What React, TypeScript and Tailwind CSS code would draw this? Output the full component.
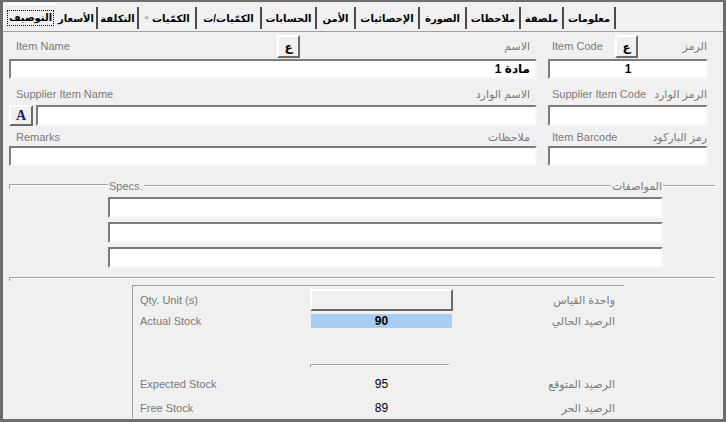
const tabs: { label: string; w: string; small?: boolean }[] = [
  { label: "الأسعار", w: "w-[42px]" },
  { label: "التكلفة", w: "w-[41px]" },
  { label: "الكمّيات", w: "w-[58px]", small: true },
  { label: "الكمّيات/ت", w: "w-[65px]" },
  { label: "الحسابات", w: "w-[55px]" },
  { label: "الأمن", w: "w-[39px]" },
  { label: "الإحصائيات", w: "w-[64px]" },
  { label: "الصورة", w: "w-[47px]" },
  { label: "ملاحظات", w: "w-[54px]" },
  { label: "ملصقة", w: "w-[43px]" },
  { label: "معلومات", w: "w-[52px]" },
];

const sunken =
  "bg-white border-2 border-t-[#7c7c7c] border-l-[#7c7c7c] border-r-[#f7f7f7] border-b-[#f7f7f7]";
const raised =
  "bg-[#f0f0f0] border-2 border-t-white border-l-white border-r-[#6a6a6a] border-b-[#6a6a6a]";

function Tabs() {
  return (
    <div className="flex h-[29px] items-end">
      <div className="flex h-[28px] w-[53px] items-center justify-center border-l-2 border-t-2 border-white">
        <span
          dir="rtl"
          className="whitespace-nowrap border border-dotted border-black px-[1px] text-[10px] font-bold leading-[14px] text-black"
        >
          التوصيف
        </span>
      </div>
      {tabs.map((t) => (
        <div
          key={t.label}
          className={`mb-[2px] flex h-[22px] ${t.w} items-center justify-center whitespace-nowrap border-r-2 border-[#4a4a4a]`}
        >
          {t.small && <span className="mr-[3px] text-[8px] text-[#777]">×</span>}
          <span dir="rtl" className="text-[10px] font-bold text-black">
            {t.label}
          </span>
        </div>
      ))}
    </div>
  );
}

function StockRow({
  en,
  ar,
  children,
  cls,
}: {
  en: string;
  ar: string;
  children?: React.ReactNode;
  cls: string;
}) {
  return (
    <div className={`flex items-center ${cls}`}>
      <span className="w-[177px] pl-[7px] text-[#7a7a7a]">{en}</span>
      <div className="flex w-[143px] justify-center">{children}</div>
      <span dir="rtl" className="flex-1 pr-[9px] text-right text-[#7a7a7a]">
        {ar}
      </span>
    </div>
  );
}

export default function App() {
  return (
    <div className="h-[422px] w-[726px] overflow-hidden border-x-[3px] border-b-[3px] border-t-2 border-[#6d6d6d] bg-[#f0f0f0] text-[11px] [font-family:'Liberation_Sans','DejaVu_Sans',sans-serif]">
      <Tabs />
      <div className="flex h-[362px] flex-col border-t border-[#a0a0a0] pl-[6px]">
        {/* row 1 */}
        <div className="mt-[3px] flex w-[699px] gap-[11px]">
          <div className="flex w-[528px] flex-col">
            <div className="flex h-[23px] items-center">
              <span className="w-[268px] pl-[7px] text-[#7a7a7a]">Item Name</span>
              <div className={`flex h-[23px] w-[23px] items-center justify-center text-[12px] font-bold ${raised}`}>
                ع
              </div>
              <span dir="rtl" className="flex-1 pr-[7px] text-right text-[#7a7a7a]">
                الاسم
              </span>
            </div>
            <div className={`mt-[1px] flex h-[20px] items-center justify-end pr-[5px] text-[12px] font-bold ${sunken}`}>
              مادة 1
            </div>
          </div>
          <div className="flex w-[160px] flex-col">
            <div className="flex h-[23px] items-center">
              <span className="w-[67px] pl-[4px] text-[#7a7a7a]">Item Code</span>
              <div className={`flex h-[23px] w-[23px] items-center justify-center text-[12px] font-bold ${raised}`}>
                ع
              </div>
              <span dir="rtl" className="flex-1 pr-[1px] text-right text-[#7a7a7a]">
                الرمز
              </span>
            </div>
            <div className={`mt-[1px] flex h-[20px] items-center justify-center text-[12px] font-bold ${sunken}`}>
              1
            </div>
          </div>
        </div>

        {/* row 2 */}
        <div className="mt-[5px] flex w-[699px] gap-[11px]">
          <div className="flex w-[528px] flex-col">
            <div className="flex h-[20px] items-center justify-between px-[7px] text-[#7a7a7a]">
              <span>Supplier Item Name</span>
              <span dir="rtl">الاسم الوارد</span>
            </div>
            <div className="mt-[1px] flex gap-[3px]">
              <div className={`flex h-[21px] w-[24px] items-center justify-center text-[14px] font-bold text-[#1b1b73] [font-family:'Liberation_Serif',serif] ${raised}`}>
                A
              </div>
              <div className={`h-[21px] flex-1 ${sunken}`} />
            </div>
          </div>
          <div className="flex w-[160px] flex-col">
            <div className="flex h-[20px] items-center justify-between pl-[4px] pr-[1px] text-[#7a7a7a]">
              <span>Supplier Item Code</span>
              <span dir="rtl">الرمز الوارد</span>
            </div>
            <div className={`mt-[1px] h-[21px] ${sunken}`} />
          </div>
        </div>

        {/* row 3 */}
        <div className="flex w-[699px] gap-[11px]">
          <div className="flex w-[528px] flex-col">
            <div className="flex h-[20px] items-center justify-between px-[7px] pt-[2px] text-[#7a7a7a]">
              <span>Remarks</span>
              <span dir="rtl">ملاحظات</span>
            </div>
            <div className={`h-[20px] ${sunken}`} />
          </div>
          <div className="flex w-[160px] flex-col">
            <div className="flex h-[20px] items-center justify-between pl-[4px] pr-[1px] pt-[2px] text-[#7a7a7a]">
              <span>Item Barcode</span>
              <span dir="rtl">رمز الباركود</span>
            </div>
            <div className={`h-[20px] ${sunken}`} />
          </div>
        </div>

        {/* specs */}
        <div className="mt-[14px] flex h-[12px] w-[706px] items-center text-[#7a7a7a]">
          <div className="flex w-[99px] items-start self-center">
            <div className="h-[5px] w-[1px] bg-[#a0a0a0]" />
            <div className="h-[2px] flex-1 border-y border-t-[#a0a0a0] border-b-white" />
          </div>
          <span className="px-[1px]">Specs.</span>
          <div className="h-[2px] flex-1 border-y border-t-[#a0a0a0] border-b-white" />
          <span dir="rtl" className="px-[1px]">المواصفات</span>
          <div className="h-[2px] w-[52px] border-y border-t-[#a0a0a0] border-b-white" />
        </div>
        <div className="ml-[99px] mt-[5px] flex w-[555px] flex-col gap-[4px]">
          <div className={`h-[21px] ${sunken}`} />
          <div className={`h-[21px] ${sunken}`} />
          <div className={`h-[21px] ${sunken}`} />
        </div>

        <div className="mt-[9px] flex w-[706px] items-start">
          <div className="h-[4px] w-[1px] bg-[#a0a0a0]" />
          <div className="h-[2px] flex-1 border-y border-t-[#a0a0a0] border-b-white" />
        </div>

        {/* stock panel */}
        <div className="ml-[123px] mt-[4px] flex w-[492px] flex-1 flex-col border-l border-t border-[#a0a0a0]">
          <StockRow en="Qty. Unit (s)" ar="واحدة القياس" cls="mt-[3px] h-[22px]">
            <div className={`h-[22px] w-[143px] ${raised}`} />
          </StockRow>
          <StockRow en="Actual Stock" ar="الرصيد الحالي" cls="mt-[3px] h-[14px]">
            <div className="flex h-[14px] w-[141px] items-center justify-center bg-[#a9ccf2] text-[12px] font-bold text-black">
              90
            </div>
          </StockRow>
          <div className="ml-[177px] mt-[36px] flex w-[139px] items-start">
            <div className="h-[3px] w-[1px] bg-[#a0a0a0]" />
            <div className="h-[2px] flex-1 border-y border-t-[#a0a0a0] border-b-white" />
          </div>
          <StockRow en="Expected Stock" ar="الرصيد المتوقع" cls="mt-[7px] h-[20px]">
            <span className="text-[12px] text-black">95</span>
          </StockRow>
          <StockRow en="Free Stock" ar="الرصيد الحر" cls="mt-[4px] h-[20px]">
            <span className="text-[12px] text-black">89</span>
          </StockRow>
        </div>
      </div>
    </div>
  );
}
